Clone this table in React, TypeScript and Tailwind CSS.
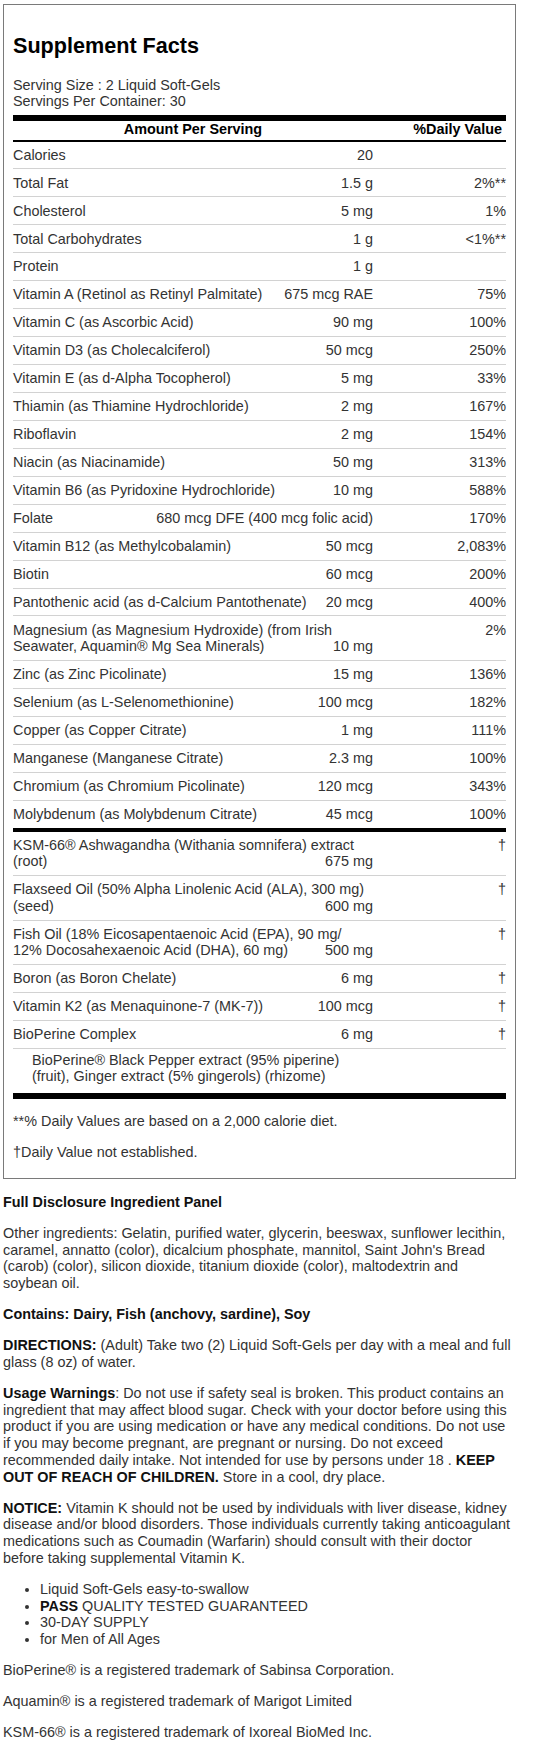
type Row = {
  label: string;
  label2?: string;
  amount: string;
  dv: string;
  last?: boolean;
};

const vitamins: Row[] = [
  { label: "Calories", amount: "20", dv: "" },
  { label: "Total Fat", amount: "1.5 g", dv: "2%**" },
  { label: "Cholesterol", amount: "5 mg", dv: "1%" },
  { label: "Total Carbohydrates", amount: "1 g", dv: "<1%**" },
  { label: "Protein", amount: "1 g", dv: "" },
  { label: "Vitamin A (Retinol as Retinyl Palmitate)", amount: "675 mcg RAE", dv: "75%" },
  { label: "Vitamin C (as Ascorbic Acid)", amount: "90 mg", dv: "100%" },
  { label: "Vitamin D3 (as Cholecalciferol)", amount: "50 mcg", dv: "250%" },
  { label: "Vitamin E (as d-Alpha Tocopherol)", amount: "5 mg", dv: "33%" },
  { label: "Thiamin (as Thiamine Hydrochloride)", amount: "2 mg", dv: "167%" },
  { label: "Riboflavin", amount: "2 mg", dv: "154%" },
  { label: "Niacin (as Niacinamide)", amount: "50 mg", dv: "313%" },
  { label: "Vitamin B6 (as Pyridoxine Hydrochloride)", amount: "10 mg", dv: "588%" },
  { label: "Folate", amount: "680 mcg DFE (400 mcg folic acid)", dv: "170%" },
  { label: "Vitamin B12 (as Methylcobalamin)", amount: "50 mcg", dv: "2,083%" },
  { label: "Biotin", amount: "60 mcg", dv: "200%" },
  { label: "Pantothenic acid (as d-Calcium Pantothenate)", amount: "20 mcg", dv: "400%" },
  {
    label: "Magnesium (as Magnesium Hydroxide) (from Irish",
    label2: "Seawater, Aquamin® Mg Sea Minerals)",
    amount: "10 mg",
    dv: "2%",
  },
  { label: "Zinc (as Zinc Picolinate)", amount: "15 mg", dv: "136%" },
  { label: "Selenium (as L-Selenomethionine)", amount: "100 mcg", dv: "182%" },
  { label: "Copper (as Copper Citrate)", amount: "1 mg", dv: "111%" },
  { label: "Manganese (Manganese Citrate)", amount: "2.3 mg", dv: "100%" },
  { label: "Chromium (as Chromium Picolinate)", amount: "120 mcg", dv: "343%" },
  { label: "Molybdenum (as Molybdenum Citrate)", amount: "45 mcg", dv: "100%", last: true },
];

const extras: Row[] = [
  {
    label: "KSM-66® Ashwagandha (Withania somnifera) extract",
    label2: "(root)",
    amount: "675 mg",
    dv: "†",
  },
  {
    label: "Flaxseed Oil (50% Alpha Linolenic Acid (ALA), 300 mg)",
    label2: "(seed)",
    amount: "600 mg",
    dv: "†",
  },
  {
    label: "Fish Oil (18% Eicosapentaenoic Acid (EPA), 90 mg/",
    label2: "12% Docosahexaenoic Acid (DHA), 60 mg)",
    amount: "500 mg",
    dv: "†",
  },
  { label: "Boron (as Boron Chelate)", amount: "6 mg", dv: "†" },
  { label: "Vitamin K2 (as Menaquinone-7 (MK-7))", amount: "100 mcg", dv: "†" },
  { label: "BioPerine Complex", amount: "6 mg", dv: "†" },
];

function FactRow({ row }: { row: Row }) {
  return (
    <div
      className={`flex py-[5.2px] ${
        row.last ? "border-b-4 border-black" : "border-b border-[#d2d2d2]"
      }`}
    >
      {row.label2 ? (
        <div className="flex-1">
          <div className="whitespace-nowrap">{row.label}</div>
          <div className="flex justify-between">
            <span>{row.label2}</span>
            <span className="whitespace-nowrap">{row.amount}</span>
          </div>
        </div>
      ) : (
        <div className="flex-1 flex justify-between">
          <span className="whitespace-nowrap">{row.label}</span>
          <span className="whitespace-nowrap">{row.amount}</span>
        </div>
      )}
      <div className="w-[133px] text-right">{row.dv}</div>
    </div>
  );
}

function App() {
  return (
    <div className="min-h-screen bg-white pl-[3px] pt-[4px] font-['Liberation_Sans',Arial,sans-serif] text-[14.4px] leading-[1.15] text-[#333]">
      <div className="w-[513px]">
        {/* Supplement Facts box */}
        <div className="border border-[#7a7a7a] px-[9px] pb-[17.5px]">
          <h1 className="pt-[29px] text-[21.6px] leading-[1.15] font-bold text-black">
            Supplement Facts
          </h1>
          <div className="mt-[18px]">
            <div>Serving Size : 2 Liquid Soft-Gels</div>
            <div>Servings Per Container: 30</div>
          </div>

          <div className="mt-[5.5px] h-[6px] bg-black"></div>

          {/* Header */}
          <div className="flex border-b-2 border-black pb-[1.5px] font-bold text-black">
            <div className="flex-1 text-center">Amount Per Serving</div>
            <div className="w-[133px] pr-[4px] text-right">%Daily Value</div>
          </div>

          {vitamins.map((row) => (
            <FactRow key={row.label} row={row} />
          ))}
          {extras.map((row) => (
            <FactRow key={row.label} row={row} />
          ))}

          <div className="pl-[19px] pt-[3px] pb-[8px]">
            BioPerine® Black Pepper extract (95% piperine)
            <br />
            (fruit), Ginger extract (5% gingerols) (rhizome)
          </div>
          <div className="h-[6px] bg-black"></div>

          <p className="mt-[14.4px]">**% Daily Values are based on a 2,000 calorie diet.</p>
          <p className="mt-[14.4px]">†Daily Value not established.</p>
        </div>

        {/* Ingredient panel */}
        <div className="leading-[16.7px]">
          <p className="my-[14.4px] font-bold text-[#111]">Full Disclosure Ingredient Panel</p>
          <p className="my-[14.4px]">
            Other ingredients: Gelatin, purified water, glycerin, beeswax, sunflower lecithin,
            caramel, annatto (color), dicalcium phosphate, mannitol, Saint John's Bread
            (carob) (color), silicon dioxide, titanium dioxide (color), maltodextrin and
            soybean oil.
          </p>
          <p className="my-[14.4px] font-bold text-[#111]">
            Contains: Dairy, Fish (anchovy, sardine), Soy
          </p>
          <p className="my-[14.4px]">
            <b className="text-[#111]">DIRECTIONS:</b> (Adult) Take two (2) Liquid Soft-Gels
            per day with a meal and full glass (8 oz) of water.
          </p>
          <p className="my-[14.4px]">
            <b className="text-[#111]">Usage Warnings</b>: Do not use if safety seal is
            broken. This product contains an ingredient that may affect blood sugar. Check
            with your doctor before using this product if you are using medication or have
            any medical conditions. Do not use if you may become pregnant, are pregnant or
            nursing. Do not exceed recommended daily intake. Not intended for use by persons
            under 18 . <b className="text-[#111]">KEEP OUT OF REACH OF CHILDREN.</b> Store in a
            cool, dry place.
          </p>
          <p className="my-[14.4px]">
            <b className="text-[#111]">NOTICE:</b> Vitamin K should not be used by
            individuals with liver disease, kidney disease and/or blood disorders. Those
            individuals currently taking anticoagulant medications such as Coumadin
            (Warfarin) should consult with their doctor before taking supplemental Vitamin K.
          </p>
          <ul className="my-[14.4px] list-disc pl-[37px]">
            <li>Liquid Soft-Gels easy-to-swallow</li>
            <li>
              <b className="text-[#111]">PASS</b> QUALITY TESTED GUARANTEED
            </li>
            <li>30-DAY SUPPLY</li>
            <li>for Men of All Ages</li>
          </ul>
          <p className="my-[14.4px]">BioPerine® is a registered trademark of Sabinsa Corporation.</p>
          <p className="my-[14.4px]">Aquamin® is a registered trademark of Marigot Limited</p>
          <p className="my-[14.4px]">KSM-66® is a registered trademark of Ixoreal BioMed Inc.</p>
        </div>
      </div>
    </div>
  );
}

export default App;
